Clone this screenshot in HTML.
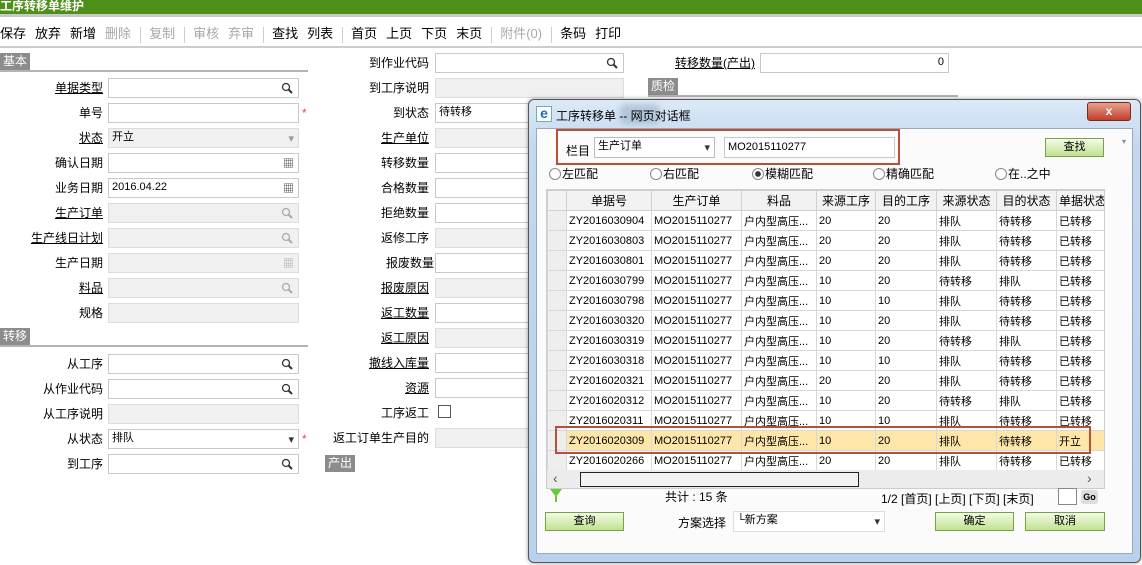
<!DOCTYPE html>
<html><head><meta charset="utf-8"><style>
*{margin:0;padding:0;box-sizing:border-box}
body{width:1142px;height:565px;overflow:hidden;background:#fff;font-family:"Liberation Sans","Noto Sans CJK SC","WenQuanYi Zen Hei",sans-serif;font-size:12px;color:#000;position:relative}
.a{position:absolute}
.lb{position:absolute;text-align:right;white-space:nowrap;line-height:20px}
.u{text-decoration:underline}
.in{position:absolute;height:20px;border:1px solid #c8c8c8;background:#fff;font-size:11px;padding-left:3px;line-height:16px}
.g{background:#f0f0f0;border-color:#dcdcdc}
.ic{position:absolute;right:4px;top:2px;font-size:11px;color:#333}
.sec{position:absolute;background:#8c8c8c;color:#fff;height:17px;line-height:17px;padding:0 3px}
.hl{position:absolute;height:2px;background:#b4b4b4}
.tb span{margin-right:9px}
.dis{color:#a8a8a8}
.sep{display:inline-block;width:1px;height:16px;background:#ccc;vertical-align:middle;margin-right:8px}
table{border-collapse:collapse;font-size:11px}
td{border:1px solid #d8d8d8;height:20px;padding:0 2px;white-space:nowrap;overflow:hidden}
th{border:1px solid #d0d0d0;font-weight:normal;background:#f2f2f2;height:20px;font-size:12px;white-space:nowrap;overflow:hidden}
.btn{position:absolute;height:19px;border:1px solid #7aa04a;background:linear-gradient(#f2fbe6,#bfe28f);text-align:center;line-height:17px;font-size:11px}
.rd{display:inline-block;width:12px;height:12px;border:1px solid #888;border-radius:50%;vertical-align:-2px;margin-right:1px;background:#fff}
svg.m{position:absolute;right:5px;top:3px}
</style></head><body>
<svg width="0" height="0" style="position:absolute"><defs><symbol id="mg" viewBox="0 0 12 12"><circle cx="5" cy="5" r="3.5" fill="none" stroke="currentColor" stroke-width="1.3"/><path d="M7.5 7.5L11 11" stroke="currentColor" stroke-width="2"/></symbol></defs></svg>
<div class="a" style="left:0;top:0;width:1142px;height:14px;background:#4e8f1a;color:#fff;font-weight:bold;font-size:12px;line-height:13px">工序转移单维护</div>
<div class="a" style="left:0;top:14px;width:1142px;height:3px;background:#c9c9c9"></div>
<div class="a tb" style="left:0;top:25px;font-size:13px;line-height:18px;white-space:nowrap">
<span>保存</span><span>放弃</span><span>新增</span><span class="dis">删除</span><i class="sep"></i><span class="dis">复制</span><i class="sep"></i><span class="dis">审核</span><span class="dis">弃审</span><i class="sep"></i><span>查找</span><span>列表</span><i class="sep"></i><span>首页</span><span>上页</span><span>下页</span><span>末页</span><i class="sep"></i><span class="dis">附件(0)</span><i class="sep"></i><span>条码</span><span>打印</span></div>
<div class="a" style="left:0;top:46px;width:1142px;height:2px;background:#ccc"></div>

<div class="sec" style="left:0;top:53px">基本</div><div class="hl" style="left:0;top:70px;width:308px"></div>
<div class="sec" style="left:0;top:328px">转移</div><div class="hl" style="left:0;top:345px;width:308px"></div>
<div class="sec" style="left:325px;top:455px">产出</div>
<div class="sec" style="left:648px;top:78px">质检</div><div class="hl" style="left:648px;top:95px;width:310px"></div>

<div class="lb u" style="right:1039px;top:78px">单据类型</div><div class="in" style="left:108px;top:78px;width:191px"><svg class="m" width="12" height="12" style="color:#333"><use href="#mg"/></svg></div>
<div class="lb" style="right:1039px;top:103px">单号</div><div class="in" style="left:108px;top:103px;width:191px"></div><div class="a" style="left:302px;top:106px;color:#e44">*</div>
<div class="lb u" style="right:1039px;top:128px">状态</div><div class="in g" style="left:108px;top:128px;width:191px">开立<span class="ic" style="color:#999">▾</span></div>
<div class="lb" style="right:1039px;top:153px">确认日期</div><div class="in" style="left:108px;top:153px;width:191px"><span class="ic">▦</span></div>
<div class="lb" style="right:1039px;top:178px">业务日期</div><div class="in" style="left:108px;top:178px;width:191px">2016.04.22<span class="ic">▦</span></div>
<div class="lb u" style="right:1039px;top:203px">生产订单</div><div class="in g" style="left:108px;top:203px;width:191px"><svg class="m" width="12" height="12" style="color:#aaa"><use href="#mg"/></svg></div>
<div class="lb u" style="right:1039px;top:228px">生产线日计划</div><div class="in g" style="left:108px;top:228px;width:191px"><svg class="m" width="12" height="12" style="color:#aaa"><use href="#mg"/></svg></div>
<div class="lb" style="right:1039px;top:253px">生产日期</div><div class="in g" style="left:108px;top:253px;width:191px"><span class="ic" style="color:#aaa">▦</span></div>
<div class="lb u" style="right:1039px;top:278px">料品</div><div class="in g" style="left:108px;top:278px;width:191px"><svg class="m" width="12" height="12" style="color:#aaa"><use href="#mg"/></svg></div>
<div class="lb" style="right:1039px;top:303px">规格</div><div class="in g" style="left:108px;top:303px;width:191px"></div>

<div class="lb" style="right:1039px;top:354px">从工序</div><div class="in" style="left:108px;top:354px;width:191px"><svg class="m" width="12" height="12" style="color:#333"><use href="#mg"/></svg></div>
<div class="lb" style="right:1039px;top:379px">从作业代码</div><div class="in" style="left:108px;top:379px;width:191px"><svg class="m" width="12" height="12" style="color:#333"><use href="#mg"/></svg></div>
<div class="lb" style="right:1039px;top:404px">从工序说明</div><div class="in g" style="left:108px;top:404px;width:191px"></div>
<div class="lb" style="right:1039px;top:429px">从状态</div><div class="in" style="left:108px;top:429px;width:191px">排队<span class="ic">▾</span></div><div class="a" style="left:302px;top:432px;color:#e44">*</div>
<div class="lb" style="right:1039px;top:454px">到工序</div><div class="in" style="left:108px;top:454px;width:191px"><svg class="m" width="12" height="12" style="color:#333"><use href="#mg"/></svg></div>

<div class="lb" style="right:713px;top:53px">到作业代码</div><div class="in" style="left:435px;top:53px;width:189px"><svg class="m" width="12" height="12" style="color:#333"><use href="#mg"/></svg></div>
<div class="lb" style="right:713px;top:78px">到工序说明</div><div class="in g" style="left:435px;top:78px;width:189px"></div>
<div class="lb" style="right:713px;top:103px">到状态</div><div class="in" style="left:435px;top:103px;width:189px">待转移</div>
<div class="lb u" style="right:713px;top:128px">生产单位</div><div class="in g" style="left:435px;top:128px;width:189px"></div>
<div class="lb" style="right:713px;top:153px">转移数量</div><div class="in" style="left:435px;top:153px;width:189px"></div>
<div class="lb" style="right:713px;top:178px">合格数量</div><div class="in" style="left:435px;top:178px;width:189px"></div>
<div class="lb" style="right:713px;top:203px">拒绝数量</div><div class="in" style="left:435px;top:203px;width:189px"></div>
<div class="lb" style="right:713px;top:228px">返修工序</div><div class="in g" style="left:435px;top:228px;width:189px"></div>
<div class="lb" style="right:708px;top:253px">报废数量</div><div class="in" style="left:435px;top:253px;width:189px"></div>
<div class="lb u" style="right:713px;top:278px">报废原因</div><div class="in g" style="left:435px;top:278px;width:189px"></div>
<div class="lb u" style="right:713px;top:303px">返工数量</div><div class="in" style="left:435px;top:303px;width:189px"></div>
<div class="lb u" style="right:713px;top:328px">返工原因</div><div class="in g" style="left:435px;top:328px;width:189px"></div>
<div class="lb u" style="right:713px;top:353px">撤线入库量</div><div class="in" style="left:435px;top:353px;width:189px"></div>
<div class="lb u" style="right:713px;top:378px">资源</div><div class="in" style="left:435px;top:378px;width:189px"></div>
<div class="lb" style="right:713px;top:403px">工序返工</div><div class="a" style="left:438px;top:405px;width:13px;height:13px;border:1px solid #555;background:#fff"></div>
<div class="lb" style="right:713px;top:428px">返工订单生产目的</div><div class="in g" style="left:435px;top:428px;width:189px"></div>

<div class="lb u" style="right:387px;top:53px">转移数量(产出)</div><div class="in" style="left:760px;top:53px;width:189px;text-align:right;padding-right:4px">0</div>

<div class="a" style="left:528px;top:99px;width:613px;height:464px;border:1px solid #555;border-radius:6px;background:linear-gradient(#dce9f7,#c3d8ef 10%,#b9d1ec);box-shadow:0 0 4px rgba(0,0,0,.4)"></div>
<div class="a" style="left:620px;top:104px;width:40px;height:20px;background:rgba(120,140,170,.35);border-radius:6px;filter:blur(3px)"></div>
<div class="a" style="left:536px;top:106px;width:16px;height:16px;border:1px solid #7aa;background:#fff;color:#1a6fc9;font-weight:bold;font-size:14px;line-height:13px;text-align:center">e</div>
<div class="a" style="left:556px;top:107px;font-size:12px">工序转移单 -- 网页对话框</div>
<div class="a" style="left:1087px;top:102px;width:44px;height:19px;border:1px solid #7a2a1a;border-radius:3px;background:linear-gradient(#e8a090,#c0402a);color:#fff;font-weight:bold;text-align:center;line-height:17px">x</div>
<div class="a" style="left:536px;top:128px;width:597px;height:426px;background:#fbfbfb;border:1px solid #9ab"></div>

<div class="a" style="left:566px;top:142px">栏目</div>
<div class="in" style="left:594px;top:137px;width:121px;height:21px;border-color:#bbb">生产订单<span class="ic">▾</span></div>
<div class="in" style="left:724px;top:137px;width:171px;height:21px;font-size:11px;line-height:18px">MO2015110277</div>
<div class="a" style="left:556px;top:129px;width:344px;height:36px;border:2px solid #b5513a"></div>
<div class="btn" style="left:1045px;top:138px;width:59px">查找</div>
<div class="a" style="left:1122px;top:137px;font-size:8px;color:#888">▾</div>

<div class="a" style="left:549px;top:166px;white-space:nowrap;line-height:16px"><span class="rd"></span>左匹配</div>
<div class="a" style="left:650px;top:166px;white-space:nowrap;line-height:16px"><span class="rd"></span>右匹配</div>
<div class="a" style="left:752px;top:166px;white-space:nowrap;line-height:16px"><span class="rd" style="background:radial-gradient(#333 35%,#fff 45%)"></span>模糊匹配</div>
<div class="a" style="left:873px;top:166px;white-space:nowrap;line-height:16px"><span class="rd"></span>精确匹配</div>
<div class="a" style="left:995px;top:166px;white-space:nowrap;line-height:16px"><span class="rd"></span>在..之中</div>

<div class="a" style="left:546px;top:189px;width:559px;height:300px;overflow:hidden;background:#fff;border:1px solid #ccc">
<table style="table-layout:fixed;width:562px">
<colgroup><col style="width:19px"><col style="width:85px"><col style="width:90px"><col style="width:75px"><col style="width:59px"><col style="width:61px"><col style="width:60px"><col style="width:60px"><col style="width:53px"></colgroup>
<tr><th></th><th>单据号</th><th>生产订单</th><th>料品</th><th>来源工序</th><th>目的工序</th><th>来源状态</th><th>目的状态</th><th>单据状态</th></tr>
<tr><td style="background:#eee"></td><td>ZY2016030904</td><td>MO2015110277</td><td>户内型高压...</td><td>20</td><td>20</td><td>排队</td><td>待转移</td><td>已转移</td></tr>
<tr><td style="background:#eee"></td><td>ZY2016030803</td><td>MO2015110277</td><td>户内型高压...</td><td>20</td><td>20</td><td>排队</td><td>待转移</td><td>已转移</td></tr>
<tr><td style="background:#eee"></td><td>ZY2016030801</td><td>MO2015110277</td><td>户内型高压...</td><td>20</td><td>20</td><td>排队</td><td>待转移</td><td>已转移</td></tr>
<tr><td style="background:#eee"></td><td>ZY2016030799</td><td>MO2015110277</td><td>户内型高压...</td><td>10</td><td>20</td><td>待转移</td><td>排队</td><td>已转移</td></tr>
<tr><td style="background:#eee"></td><td>ZY2016030798</td><td>MO2015110277</td><td>户内型高压...</td><td>10</td><td>10</td><td>排队</td><td>待转移</td><td>已转移</td></tr>
<tr><td style="background:#eee"></td><td>ZY2016030320</td><td>MO2015110277</td><td>户内型高压...</td><td>10</td><td>20</td><td>排队</td><td>待转移</td><td>已转移</td></tr>
<tr><td style="background:#eee"></td><td>ZY2016030319</td><td>MO2015110277</td><td>户内型高压...</td><td>10</td><td>20</td><td>待转移</td><td>排队</td><td>已转移</td></tr>
<tr><td style="background:#eee"></td><td>ZY2016030318</td><td>MO2015110277</td><td>户内型高压...</td><td>10</td><td>10</td><td>排队</td><td>待转移</td><td>已转移</td></tr>
<tr><td style="background:#eee"></td><td>ZY2016020321</td><td>MO2015110277</td><td>户内型高压...</td><td>20</td><td>20</td><td>排队</td><td>待转移</td><td>已转移</td></tr>
<tr><td style="background:#eee"></td><td>ZY2016020312</td><td>MO2015110277</td><td>户内型高压...</td><td>10</td><td>20</td><td>待转移</td><td>排队</td><td>已转移</td></tr>
<tr><td style="background:#eee"></td><td>ZY2016020311</td><td>MO2015110277</td><td>户内型高压...</td><td>10</td><td>10</td><td>排队</td><td>待转移</td><td>已转移</td></tr>
<tr style="background:#fde6a8"><td style="background:#eee"></td><td>ZY2016020309</td><td>MO2015110277</td><td>户内型高压...</td><td>10</td><td>20</td><td>排队</td><td>待转移</td><td>开立</td></tr>
<tr><td style="background:#eee"></td><td>ZY2016020266</td><td>MO2015110277</td><td>户内型高压...</td><td>20</td><td>20</td><td>排队</td><td>待转移</td><td>已转移</td></tr>
</table>
<div class="a" style="left:0;top:280px;width:559px;height:19px;background:#ececec"></div>
<div class="a" style="left:6px;top:280px;font-size:14px;color:#555">‹</div>
<div class="a" style="left:33px;top:282px;width:279px;height:15px;border:1px solid #222;background:#f3f3f3"></div>
<div class="a" style="left:540px;top:280px;font-size:14px;color:#555">›</div>
</div>
<div class="a" style="left:555px;top:426px;width:536px;height:28px;border:2px solid #b5513a"></div>

<div class="a" style="left:550px;top:489px;width:0;height:0;border-left:6px solid transparent;border-right:6px solid transparent;border-top:8px solid #6c3"></div>
<div class="a" style="left:555px;top:496px;width:2px;height:6px;background:#6c3"></div>
<div class="a" style="left:665px;top:488px">共计 : 15 条</div>
<div class="a" style="left:881px;top:490px;white-space:nowrap">1/2 [首页] [上页] [下页] [末页]</div>
<div class="a" style="left:1058px;top:488px;width:19px;height:17px;border:1px solid #888;background:#fff"></div>
<div class="a" style="left:1081px;top:490px;width:17px;height:14px;border-radius:3px;background:#ddd;font-size:9px;font-weight:bold;text-align:center;line-height:14px">Go</div>

<div class="btn" style="left:545px;top:512px;width:79px">查询</div>
<div class="a" style="left:678px;top:514px">方案选择</div>
<div class="in" style="left:733px;top:511px;width:152px;height:21px;border-color:#ddd">└新方案<span class="ic">▾</span></div>
<div class="btn" style="left:935px;top:512px;width:79px">确定</div>
<div class="btn" style="left:1025px;top:512px;width:80px">取消</div>
</body></html>
